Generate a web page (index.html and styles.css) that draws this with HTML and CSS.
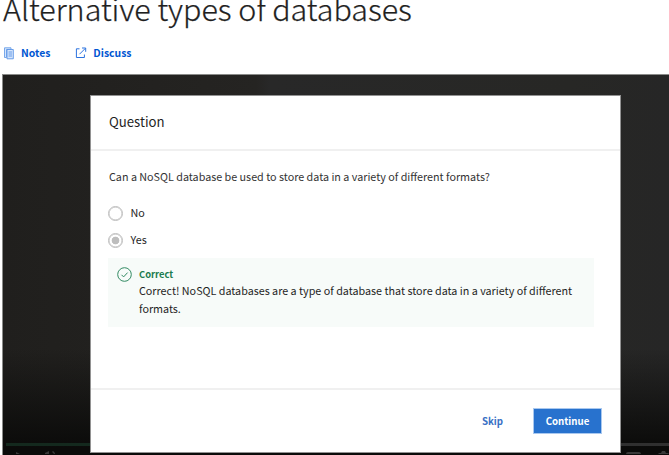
FILE: index.html
```html
<!DOCTYPE html>
<html lang="en">
<head>
<meta charset="utf-8">
<title>Alternative types of databases</title>
<link rel="stylesheet" href="styles.css">
</head>
<body>
<header class="lesson-header">
  <h1 class="title">Alternative types of databases</h1>
  <nav class="tools">
    <a class="tool notes"><svg class="tool-icon" viewBox="0 0 12 13" width="12" height="13"><path d="M1.5 .8h6.5v1.7H3.5v8h-2z" fill="#d5e5fb" stroke="#6b9fe9" stroke-width=".9"/><path d="M4 2.5h6.3v9.3H4z" fill="#d5e5fb" stroke="#5b94e7" stroke-width=".9"/><path d="M5.5 5h3.5M5.5 7h3.5M5.5 9h3.5" stroke="#4b8be6" stroke-width=".8"/></svg><span>Notes</span></a>
    <a class="tool discuss"><svg class="tool-icon" viewBox="0 0 12 12" width="12" height="12" fill="none" stroke="#2b72df"><path d="M4.5 1.8H1.4v8.7h8V7.5M4.5 7.2l5.7-5.7M7 1h3.7v3.8"/></svg><span>Discuss</span></a>
  </nav>
</header>
<main class="player">
  <div class="controls">
    <div class="progress"><div class="played"></div></div>
    <svg class="control-icons" viewBox="0 0 663 8" width="663" height="8" fill="#393939"><path d="M10 6l4 2v2h-4zM39 7l4-2v6h-4zM47 5q3 2 2 6h-1q1-3-2-5z"/><path d="M620 8q0-2 2-2h11q2 0 2 2v3h-15zM651 9l2-2h2l1-2h3l1 2h2l2 2z"/></svg>
  </div>
  <section class="dialog">
    <h2 class="dialog-title">Question</h2>
    <div class="dialog-body">
      <p class="prompt">Can a NoSQL database be used to store data in a variety of different formats?</p>
      <div class="option"><i class="radio"></i><span>No</span></div>
      <div class="option"><i class="radio checked"></i><span>Yes</span></div>
      <div class="feedback">
        <svg class="check" viewBox="0 0 15 15" width="15" height="15" fill="none" stroke="#318a62"><circle cx="7.5" cy="7.5" r="6.8"/><path d="M4.5 7.8l2.1 2.1 4-4.3"/></svg>
        <div class="feedback-text"><strong>Correct</strong><p>Correct! NoSQL databases are a type of database that store data in a variety of different<br>formats.</p></div>
      </div>
    </div>
    <footer class="actions"><button class="skip">Skip</button><button class="continue">Continue</button></footer>
  </section>
</main>
</body>
</html>
```
FILE: styles.css
```css
* { box-sizing: border-box; }
body { margin: 0; height: 455px; overflow: hidden; background: #fff; color: #1f1f1f; font-family: "Noto Sans CJK SC", "Open Sans", sans-serif; font-size: 10.76px; }
h1, h2, p { margin: 0; font-weight: 400; }
.lesson-header { height: 74px; padding-left: 3px; }
.title { height: 36px; font-size: 30.45px; font-weight: 300; -webkit-text-stroke: .25px #1f1f1f; line-height: 16px; white-space: nowrap; }
.tools { display: flex; gap: 25px; height: 14px; color: #0056d2; font-weight: 700; font-size: 10.4px; line-height: 14px; }
.lesson-header .tools { margin-top: 10px; }
.tool { display: flex; align-items: center; gap: 6px; }
.tool-icon { display: block; }
.player { position: relative; height: 381px; margin-left: 2px; padding: 20px 0 0 87px; border: solid #8a8b89; border-width: 1px 0 0 1px; background: linear-gradient(transparent 72%, #0b0b0a 98%), linear-gradient(90deg, #201f1d, #252422 38%, #282828 40%, #272725 85%, #262626); }
.controls { position: absolute; inset: auto 0 0 0; height: 12px; padding-left: 3px; }
.progress { height: 3px; background: #303030; }
.played { width: 88px; height: 3px; background: #14291e; }
.control-icons { display: block; }
.dialog { position: relative; display: flex; flex-direction: column; width: 531px; height: 358px; background: #fff; border: 1px solid #929292; }
.dialog-title { height: 55px; padding-left: 18px; border-bottom: 2px solid #f0f0f0; font-size: 13.2px; line-height: 52px; }
.dialog-body { height: 237px; padding: 17px 25px 0 17px; }
.prompt { height: 36px; padding-left: 1px; line-height: 17px; color: #333; white-space: nowrap; }
.option { display: flex; align-items: center; gap: 8px; height: 18px; margin-bottom: 9px; }
.option span { margin-top: -1px; }
.radio { width: 15px; height: 15px; margin-left: -.5px; border: 1.5px solid #bdbdbd; box-shadow: inset 0 0 0 .5px #bdbdbd; border-radius: 50%; }
.checked { background: radial-gradient(circle, #bdbdbd 3.5px, transparent 4.2px); }
.feedback { display: flex; gap: 6px; width: 486px; height: 69px; padding: 8px 10px 0 9px; background: #f7fbf9; white-space: nowrap; }
.check { flex: none; margin-top: 1px; }
.feedback-text { padding-left: 1px; line-height: 18px; }
.feedback-text strong { display: block; height: 16px; line-height: 16px; font-size: 9.4px; color: #1d7c50; }
.actions { display: flex; justify-content: flex-end; align-items: center; height: 64px; padding: 0 18px 0 0; border-top: 2px solid #f0f0f0; gap: 30px; }
.actions button { font: 700 9.7px/22px "Noto Sans CJK SC", "Open Sans", sans-serif; padding: 0; border: 0; background: none; color: #3971c5; }
.actions .continue { width: 69px; height: 26px; border: 1px solid #a9c8ef; background: #2872ce; color: #fff; }
```
